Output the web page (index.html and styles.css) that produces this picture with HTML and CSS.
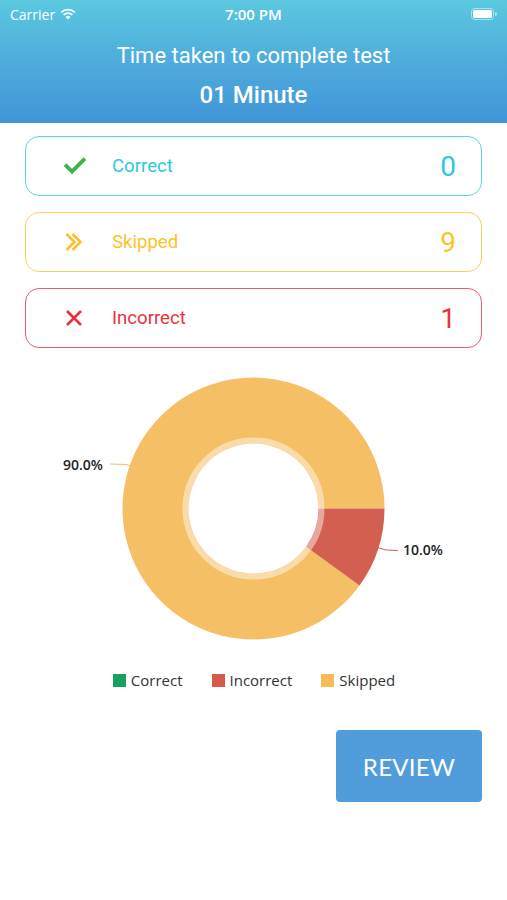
FILE: index.html
```html
<!DOCTYPE html>
<html>
<head>
<meta charset="utf-8">
<link rel="stylesheet" href="styles.css">
</head>
<body>
<header class="header">
  <div class="status">
    <div class="status-left">Carrier
      <svg class="wifi" width="16" height="12" viewBox="0 0 16 12"><path d="M8 11.5 L5.6 8.9 A3.6 3.6 0 0 1 10.4 8.9 Z" fill="#fff"/><path d="M3.6 6.8 A6.4 6.4 0 0 1 12.4 6.8" stroke="#fff" stroke-width="1.8" fill="none"/><path d="M1.2 4.3 A9.8 9.8 0 0 1 14.8 4.3" stroke="#fff" stroke-width="1.8" fill="none"/></svg>
    </div>
    <div class="status-time">7:00 PM</div>
    <div class="status-right">
      <svg width="26" height="12" viewBox="0 0 26 12"><rect x="0.5" y="0.5" width="22" height="11" rx="3" fill="none" stroke="rgba(255,255,255,0.5)"/><rect x="2" y="2" width="19" height="8" rx="1.8" fill="#fff"/><path d="M24 4 A2 2 0 0 1 24 8 Z" fill="rgba(255,255,255,0.5)"/></svg>
    </div>
  </div>
  <div class="title">Time taken to complete test</div>
  <div class="subtitle">01 Minute</div>
</header>

<main class="content">
  <section class="cards">
    <div class="card card-correct">
      <span class="card-icon"><svg width="22" height="18" viewBox="0 0 22 18"><path d="M2.5 9 L8 14.5 L19.5 3" stroke="#3bb54a" stroke-width="3.8" fill="none" stroke-linecap="square"/></svg></span>
      <span class="card-label">Correct</span>
      <span class="card-value">0</span>
    </div>
    <div class="card card-skipped">
      <span class="card-icon"><svg width="22" height="20" viewBox="0 0 22 20"><path d="M2.5 2 L10.5 10 L2.5 18" stroke="#fdbf2d" stroke-width="2.6" fill="none"/><path d="M8.5 2 L16.5 10 L8.5 18" stroke="#fdbf2d" stroke-width="2.6" fill="none"/></svg></span>
      <span class="card-label">Skipped</span>
      <span class="card-value">9</span>
    </div>
    <div class="card card-incorrect">
      <span class="card-icon"><svg width="20" height="20" viewBox="0 0 20 20"><path d="M3 3 L17 17 M17 3 L3 17" stroke="#e8303b" stroke-width="2.6" fill="none"/></svg></span>
      <span class="card-label">Incorrect</span>
      <span class="card-value">1</span>
    </div>
  </section>

  <section class="chart">
    <svg class="donut" width="507" height="290" viewBox="0 0 507 290">
      <path d="M359.5,222.5 A131,131 0 1 1 384.5,145.5 L318.5,145.5 A65,65 0 1 0 306.1,183.7 Z" fill="#f5bf66"/>
      <path d="M384.5,145.5 A131,131 0 0 1 359.5,222.5 L306.1,183.7 A65,65 0 0 0 318.5,145.5 Z" fill="#d35f50"/>
      <circle cx="253.5" cy="145.5" r="68" fill="none" stroke="rgba(255,255,255,0.45)" stroke-width="6"/>
      <path d="M110,101 L126,101.5 Q134,103 143,107" stroke="#f5bf66" stroke-width="1" fill="none"/>
      <path d="M364,181.5 Q375,183 386,187 L398,187.5" stroke="#d35f50" stroke-width="1" fill="none"/>
      <text class="pct" x="63" y="106.5">90.0%</text>
      <text class="pct" x="403" y="192">10.0%</text>
    </svg>
  </section>

  <section class="legend">
    <span class="legend-item"><i class="sw sw-green"></i>Correct</span>
    <span class="legend-item"><i class="sw sw-red"></i>Incorrect</span>
    <span class="legend-item"><i class="sw sw-orange"></i>Skipped</span>
  </section>

  <div class="actions">
    <button class="review">REVIEW</button>
  </div>
</main>
</body>
</html>
```

FILE: styles.css
```css
* { box-sizing: border-box; }
html, body { margin: 0; padding: 0; background: #fff; }
body { width: 507px; height: 900px; overflow: hidden; font-family: Roboto, "Noto Sans", sans-serif; }

.header {
  height: 123px;
  background: linear-gradient(to bottom, #5bc8df 0%, #4da9db 55%, #4195d8 100%);
  color: #fff;
  display: flex;
  flex-direction: column;
  align-items: center;
}
.status {
  width: 100%;
  height: 28px;
  display: flex;
  align-items: center;
  justify-content: space-between;
  padding: 0 10px 0 10px;
  font-family: "Open Sans", "Liberation Sans", sans-serif;
}
.status-left { display: flex; align-items: center; gap: 5px; font-size: 14px; width: 120px; }
.status-time { font-size: 15px; font-weight: 600; }
.status-right { width: 120px; display: flex; justify-content: flex-end; }
.title { margin-top: 14px; font-size: 22px; line-height: 28px; }
.subtitle { margin-top: 11px; font-size: 24px; font-weight: 500; line-height: 28px; }

.cards {
  padding: 13px 25px 0 25px;
  display: flex;
  flex-direction: column;
  gap: 16px;
}
.card {
  height: 60px;
  border: 1.6px solid;
  border-radius: 14px;
  display: flex;
  align-items: center;
  padding: 0 25px 0 38px;
}
.card-icon { width: 48px; display: flex; align-items: center; }
.card-label { flex: 1; font-size: 18.6px; }
.card-value { font-size: 28px; }
.card-correct { border-color: #5bd2e3; color: #2ec8dc; }
.card-skipped { border-color: #fcd058; color: #fcc22a; }
.card-incorrect { border-color: #ee5a69; color: #e8333f; }

.chart { margin-top: 15px; height: 290px; }
.donut { display: block; }
.pct { font-family: "Open Sans", "Liberation Sans", sans-serif; font-size: 14px; font-weight: 600; fill: #222; }

.legend {
  margin-top: 18px;
  display: flex;
  justify-content: center;
  gap: 29px;
  font-family: "Open Sans", "Liberation Sans", sans-serif;
  font-size: 15px;
  color: #333;
  padding-left: 1px;
}
.legend-item { display: flex; align-items: center; gap: 5px; line-height: 18px; }
.sw { display: inline-block; width: 13px; height: 13px; }
.sw-green { background: #15a15e; }
.sw-red { background: #d65a48; }
.sw-orange { background: #f6bc58; }

.actions { display: flex; justify-content: flex-end; padding: 41px 25px 0 0; }
.review {
  width: 146px;
  height: 72px;
  border: none;
  border-radius: 4px;
  background: #519ddc;
  color: #fff;
  font-family: Lato, "Open Sans", sans-serif;
  font-size: 24px;
  letter-spacing: 0.3px;
}
```
